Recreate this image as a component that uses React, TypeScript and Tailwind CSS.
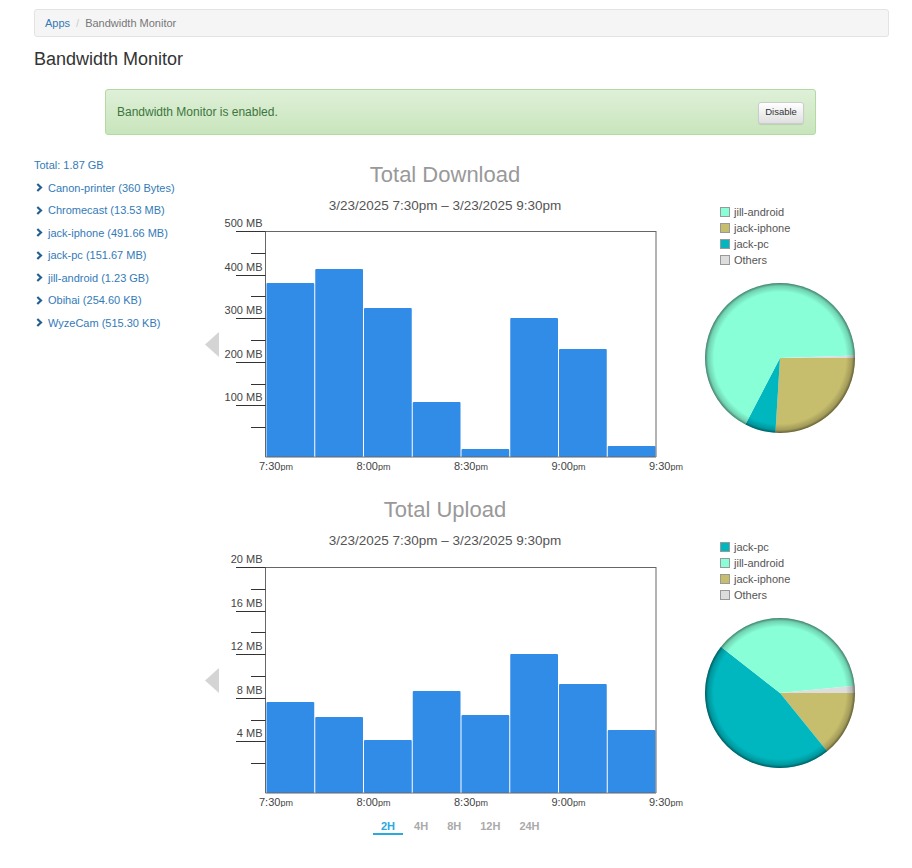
import { useId } from "react";

type Slice = { color: string; from: number; to: number };

const COLORS = {
  jill: "#88ffd6",
  iphone: "#c6bd6d",
  pc: "#00b7bf",
  others: "#dddddd",
};

const devices = [
  "Canon-printer (360 Bytes)",
  "Chromecast (13.53 MB)",
  "jack-iphone (491.66 MB)",
  "jack-pc (151.67 MB)",
  "jill-android (1.23 GB)",
  "Obihai (254.60 KB)",
  "WyzeCam (515.30 KB)",
];

// bar heights in px, one per 15 minute bucket
const downloadBars = [174, 188, 149, 55, 8, 139, 108, 11];
const uploadBars = [91, 76, 53, 102, 78, 139, 109, 63];

const downloadSlices: Slice[] = [
  { color: COLORS.iphone, from: 0, to: 93.5 },
  { color: COLORS.pc, from: 93.5, to: 117.5 },
  { color: COLORS.jill, from: 117.5, to: 358 },
  { color: COLORS.others, from: 358, to: 360 },
];

const uploadSlices: Slice[] = [
  { color: COLORS.iphone, from: 0, to: 51 },
  { color: COLORS.pc, from: 51, to: 218 },
  { color: COLORS.jill, from: 218, to: 354.5 },
  { color: COLORS.others, from: 354.5, to: 360 },
];

const timeLabels = ["7:30", "8:00", "8:30", "9:00", "9:30"];

function Chevron() {
  return (
    <svg width="7" height="9" viewBox="0 0 7 9" className="shrink-0">
      <path d="M1.3 1 L5 4.5 L1.3 8" fill="none" stroke="#245f93" strokeWidth="2.2" />
    </svg>
  );
}

function BarChart({ yLabels, bars }: { yLabels: string[]; bars: number[] }) {
  const left = 66;
  const right = 456;
  const top = 18;
  const bottom = 244;
  const step = 43.6;
  const barW = (right - left) / bars.length;

  return (
    <svg width="490" height="258" viewBox="0 0 490 258" className="block">
      <polygon points="5,131.5 19,119 19,144" fill="#d4d4d4" />
      {bars.map((h, i) => (
        <rect
          key={i}
          x={left + i * barW + 0.5}
          y={bottom - h}
          width={barW - 1}
          height={h}
          rx="1"
          fill="#318ce7"
        />
      ))}
      <line x1={65.5} y1={top} x2={65.5} y2={bottom} stroke="#666" />
      <line x1={65.5} y1={top + 0.5} x2={right} y2={top + 0.5} stroke="#666" />
      <line x1={right} y1={top} x2={right} y2={bottom} stroke="#666" />
      <line x1={65.5} y1={bottom} x2={right} y2={bottom} stroke="#666" />
      {yLabels.map((label, i) => {
        const y = Math.round(top + i * step) + 0.5;
        const minor = Math.round(top + i * step + step / 2) + 0.5;
        return (
          <g key={label}>
            <line x1={36} y1={y} x2={65.5} y2={y} stroke="#333" />
            <line x1={51} y1={minor} x2={65.5} y2={minor} stroke="#333" />
            <text x={62.5} y={y - 5} textAnchor="end" fontSize="11" fill="#444">
              {label}
            </text>
          </g>
        );
      })}
      {timeLabels.map((t, i) => (
        <text key={t} x={left + i * 97.5 - 7} y={256.5} fontSize="11" fill="#444">
          {t}
          <tspan fontSize="9">pm</tspan>
        </text>
      ))}
    </svg>
  );
}

function Pie({ slices }: { slices: Slice[] }) {
  const id = useId();
  const cx = 75;
  const cy = 75;
  const r = 75;
  const pt = (a: number) => {
    const rad = (a * Math.PI) / 180;
    return `${cx + r * Math.cos(rad)} ${cy + r * Math.sin(rad)}`;
  };

  return (
    <svg width="150" height="150" viewBox="0 0 150 150" className="block">
      <defs>
        <radialGradient id={id} cx="50%" cy="50%" r="50%">
          <stop offset="0.88" stopColor="#000" stopOpacity="0" />
          <stop offset="0.96" stopColor="#000" stopOpacity="0.18" />
          <stop offset="1" stopColor="#000" stopOpacity="0.5" />
        </radialGradient>
      </defs>
      {slices.map((s, i) => (
        <path
          key={i}
          d={`M${cx} ${cy} L${pt(s.from)} A${r} ${r} 0 ${s.to - s.from > 180 ? 1 : 0} 1 ${pt(s.to)} Z`}
          fill={s.color}
        />
      ))}
      <circle cx={cx} cy={cy} r={r} fill={`url(#${id})`} />
    </svg>
  );
}

function Legend({ items }: { items: { label: string; color: string }[] }) {
  return (
    <div className="pl-[15px]">
      {items.map((item) => (
        <div key={item.label} className="flex h-[16px] items-center gap-[4px]">
          <span
            className="size-[10px] border border-[#999]"
            style={{ backgroundColor: item.color }}
          />
          <span className="text-[11px] text-[#555]">{item.label}</span>
        </div>
      ))}
    </div>
  );
}

function ChartBlock({
  title,
  yLabels,
  bars,
  legend,
  slices,
  chartOffset = "",
}: {
  title: string;
  yLabels: string[];
  bars: number[];
  legend: { label: string; color: string }[];
  slices: Slice[];
  chartOffset?: string;
}) {
  return (
    <div className="flex">
      <div className="w-[490px]">
        <h3 className="text-center text-[22px] leading-[28px] text-[#999]">{title}</h3>
        <p className="mt-[9px] text-center text-[13.5px] leading-[15px] text-[#555]">
          3/23/2025 7:30pm – 3/23/2025 9:30pm
        </p>
        <div className={chartOffset}>
          <BarChart yLabels={yLabels} bars={bars} />
        </div>
      </div>
      <div className="ml-[15px] w-[150px] pt-[43px]">
        <Legend items={legend} />
        <div className="mt-[15px]">
          <Pie slices={slices} />
        </div>
      </div>
    </div>
  );
}

export default function App() {
  return (
    <div className="min-h-[868px] bg-white font-['Liberation_Sans',Arial,sans-serif]">
      <div className="ml-[34px] w-[855px] pt-[9px]">
        {/* Breadcrumb */}
        <div className="flex h-[28px] items-center gap-[6px] rounded-[3px] border border-[#e3e3e3] bg-[#f5f5f5] px-[10px] text-[11px]">
          <span className="text-[#337ab7]">Apps</span>
          <span className="text-[#ccc]">/</span>
          <span className="text-[#777]">Bandwidth Monitor</span>
        </div>

        <h1 className="mt-[10px] text-[18px] leading-[24px] text-[#333]">Bandwidth Monitor</h1>

        {/* Status */}
        <div className="ml-[71px] mt-[18px] flex h-[46px] w-[711px] items-center justify-between rounded-[3px] border border-[#b2dba1] bg-gradient-to-b from-[#dff0d8] to-[#c8e5bc] pl-[11px] pr-[11px]">
          <span className="text-[12px] text-[#3c763d]">Bandwidth Monitor is enabled.</span>
          <button className="mt-[1px] h-[22px] w-[46px] rounded-[3px] border border-[#ccc] bg-gradient-to-b from-white to-[#e0e0e0] text-[9.5px] text-[#333] shadow-[0_1px_1px_rgba(0,0,0,0.1)]">
            Disable
          </button>
        </div>

        <div className="mt-[19px] flex">
          {/* Devices */}
          <div className="w-[166px] text-[11px] leading-[22.5px] text-[#337ab7]">
            <div>Total: 1.87 GB</div>
            {devices.map((d) => (
              <div key={d} className="flex items-center gap-[5px] pl-[2px]">
                <Chevron />
                <span>{d}</span>
              </div>
            ))}
          </div>

          {/* Charts */}
          <div className="pt-[7px]">
            <ChartBlock
              title="Total Download"
              yLabels={["500 MB", "400 MB", "300 MB", "200 MB", "100 MB"]}
              bars={downloadBars}
              legend={[
                { label: "jill-android", color: COLORS.jill },
                { label: "jack-iphone", color: COLORS.iphone },
                { label: "jack-pc", color: COLORS.pc },
                { label: "Others", color: COLORS.others },
              ]}
              slices={downloadSlices}
            />
            <div className="mt-[25px]">
              <ChartBlock
                title="Total Upload"
                yLabels={["20 MB", "16 MB", "12 MB", "8 MB", "4 MB"]}
                bars={uploadBars}
                legend={[
                  { label: "jack-pc", color: COLORS.pc },
                  { label: "jill-android", color: COLORS.jill },
                  { label: "jack-iphone", color: COLORS.iphone },
                  { label: "Others", color: COLORS.others },
                ]}
                slices={uploadSlices}
                chartOffset="mt-[1px]"
              />
            </div>

            {/* Range tabs */}
            <div className="mt-[12px] flex gap-[3px] pl-[173px] text-[11px] font-bold leading-[14px]">
              {["2H", "4H", "8H", "12H", "24H"].map((r) => (
                <span
                  key={r}
                  className={`border-b-2 px-[8px] ${
                    r === "2H" ? "border-[#29a9e0] text-[#29a9e0]" : "border-transparent text-[#aaa]"
                  }`}
                >
                  {r}
                </span>
              ))}
            </div>
          </div>
        </div>
      </div>
    </div>
  );
}
